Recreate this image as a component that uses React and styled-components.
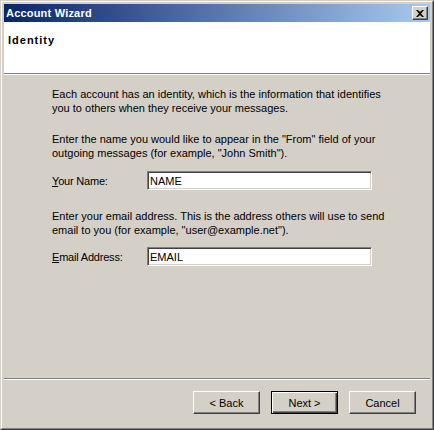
import React from 'react';
import styled, { createGlobalStyle } from 'styled-components';

const Global = createGlobalStyle`
  html, body { margin: 0; padding: 0; background: #d4d0c8; }
  body {
    font-family: "Liberation Sans", Arial, sans-serif;
    font-size: 11px;
    color: #000;
  }
  * { box-sizing: border-box; }
`;

const Frame = styled.div`
  width: 434px;
  height: 430px;
  border: 1px solid;
  border-color: #d4d0c8 #404040 #404040 #d4d0c8;
  background: #d4d0c8;
`;

const FrameInner = styled.div`
  height: 100%;
  border: 1px solid;
  border-color: #fff #808080 #808080 #fff;
  padding: 2px;
  display: flex;
  flex-direction: column;
`;

const TitleBar = styled.div`
  height: 18px;
  flex: none;
  display: flex;
  align-items: center;
  justify-content: space-between;
  padding: 0 2px 0 2px;
  background: linear-gradient(to right, #0a246a, #a6caf0);
`;

const Title = styled.span`
  color: #fff;
  font-weight: bold;
  font-size: 11px;
  letter-spacing: 0.2px;
`;

const CloseButton = styled.button`
  width: 16px;
  height: 14px;
  padding: 0;
  margin: 0;
  display: flex;
  align-items: center;
  justify-content: center;
  background: #d4d0c8;
  border: 1px solid;
  border-color: #fff #404040 #404040 #fff;
  box-shadow: inset -1px -1px 0 #808080, inset 1px 1px 0 #d4d0c8;
`;

const Header = styled.div`
  height: 51px;
  flex: none;
  background: #fff;
  padding: 11px 0 0 4px;
`;

const HeaderTitle = styled.div`
  font-weight: bold;
  font-size: 11px;
  letter-spacing: 1px;
  line-height: 14px;
`;

const Separator = styled.div`
  height: 2px;
  flex: none;
  border-top: 1px solid #808080;
  border-bottom: 1px solid #fff;
`;

const Body = styled.div`
  flex: 1;
  padding: 12px 0 0 48px;
`;

const Paragraph = styled.p`
  margin: 0 0 ${p => p.$after}px 0;
  line-height: 14px;
  white-space: nowrap;
`;

const FieldRow = styled.div`
  display: flex;
  align-items: center;
  margin: 0 0 ${p => p.$after}px 0;
`;

const Label = styled.label`
  width: 95px;
  flex: none;
  letter-spacing: -0.2px;
  u { text-decoration: underline; }
`;

const TextInput = styled.input`
  width: 225px;
  height: 19px;
  margin: 0;
  padding: 0 0 0 2px;
  font-family: "Liberation Sans", Arial, sans-serif;
  font-size: 11px;
  color: #000;
  background: #fff;
  border: 1px solid;
  border-color: #808080 #fff #fff #808080;
  box-shadow: inset 1px 1px 0 #404040, inset -1px -1px 0 #d4d0c8;
  outline: none;
`;

const ButtonBar = styled.div`
  height: 46px;
  flex: none;
  display: flex;
  justify-content: flex-end;
  align-items: flex-start;
  gap: 11px;
  padding: 11px 14px 0 0;
`;

const Button = styled.button`
  width: 67px;
  height: 23px;
  margin: 0;
  padding: 0;
  font-family: "Liberation Sans", Arial, sans-serif;
  font-size: 11px;
  color: #000;
  background: #d4d0c8;
  border: 1px solid;
  border-color: ${p => (p.$default ? '#000' : '#fff #404040 #404040 #fff')};
  box-shadow: ${p =>
    p.$default
      ? 'inset 1px 1px 0 #fff, inset -1px -1px 0 #404040, inset -2px -2px 0 #808080'
      : 'inset -1px -1px 0 #808080, inset 1px 1px 0 #d4d0c8'};
`;

export default function App() {
  return (
    <>
      <Global />
      <Frame>
        <FrameInner>
          <TitleBar>
            <Title>Account Wizard</Title>
            <CloseButton aria-label="Close">
              <svg width="8" height="7" viewBox="0 0 8 7">
                <path d="M0 0h2l2 2 2-2h2L5 3.5 8 7H6L4 5 2 7H0l3-3.5z" fill="#000" />
              </svg>
            </CloseButton>
          </TitleBar>
          <Header>
            <HeaderTitle>Identity</HeaderTitle>
          </Header>
          <Separator />
          <Body>
            <Paragraph $after={17}>
              Each account has an identity, which is the information that identifies
              <br />
              you to others when they receive your messages.
            </Paragraph>
            <Paragraph $after={11}>
              Enter the name you would like to appear in the "From" field of your
              <br />
              outgoing messages (for example, "John Smith").
            </Paragraph>
            <FieldRow $after={19}>
              <Label>
                <u>Y</u>our Name:
              </Label>
              <TextInput defaultValue="NAME" />
            </FieldRow>
            <Paragraph $after={10}>
              Enter your email address. This is the address others will use to send
              <br />
              email to you (for example, "user@example.net").
            </Paragraph>
            <FieldRow $after={0}>
              <Label>
                <u>E</u>mail Address:
              </Label>
              <TextInput defaultValue="EMAIL" />
            </FieldRow>
          </Body>
          <Separator />
          <ButtonBar>
            <Button>&lt; Back</Button>
            <Button $default>Next &gt;</Button>
            <Button>Cancel</Button>
          </ButtonBar>
        </FrameInner>
      </Frame>
    </>
  );
}
